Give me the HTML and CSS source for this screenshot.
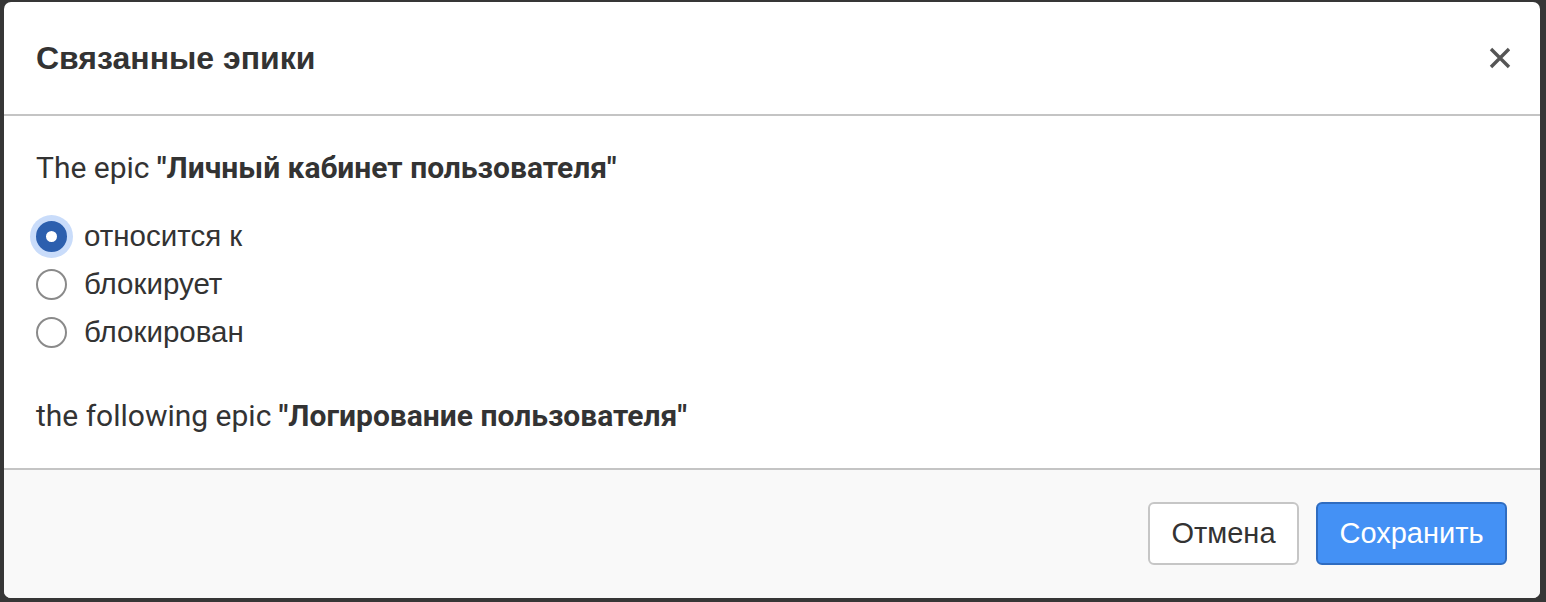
FILE: index.html
```html
<!DOCTYPE html>
<html lang="ru">
<head>
<meta charset="utf-8">
<link rel="stylesheet" href="styles.css">
</head>
<body>
<div class="backdrop">
  <div class="modal">
    <div class="modal-header">
      <h2 class="modal-title">Связанные эпики</h2>
      <button class="close" aria-label="Закрыть">
        <svg width="22" height="22" viewBox="0 0 22 22"><path d="M2 2 L20 20 M20 2 L2 20" stroke="#555" stroke-width="3.4" fill="none"/></svg>
      </button>
    </div>
    <div class="modal-body">
      <p class="line">The epic <b>"Личный кабинет пользователя"</b></p>
      <div class="radios">
        <label class="radio"><span class="dot checked"></span><span class="label">относится к</span></label>
        <label class="radio"><span class="dot"></span><span class="label">блокирует</span></label>
        <label class="radio"><span class="dot"></span><span class="label">блокирован</span></label>
      </div>
      <p class="line second">the following epic <b>"Логирование пользователя"</b></p>
    </div>
    <div class="modal-footer">
      <button class="btn btn-default">Отмена</button>
      <button class="btn btn-primary">Сохранить</button>
    </div>
  </div>
</div>
</body>
</html>
```
FILE: styles.css
```css
html, body {
  margin: 0;
  padding: 0;
  background: #363636;
}
.backdrop {
  padding: 2px 6px 4px 4px;
  height: 596px;
}
.modal {
  background: #fff;
  border-radius: 7px;
  height: 596px;
  display: flex;
  flex-direction: column;
  overflow: hidden;
}
.modal-header {
  height: 112px;
  border-bottom: 2px solid #c4c4c4;
  display: flex;
  align-items: center;
  justify-content: space-between;
  padding: 0 28px 0 32px;
  box-sizing: content-box;
}
.modal-title {
  margin: 0;
  font-family: "Liberation Sans", Arial, sans-serif;
  font-weight: bold;
  font-size: 32px;
  color: #333;
}
.close {
  background: none;
  border: 0;
  padding: 0;
  width: 24px;
  height: 24px;
  display: flex;
  align-items: center;
  justify-content: center;
}
.modal-body {
  height: 352px;
  padding: 0 32px;
  color: #333;
}
.line {
  margin: 0;
  font-family: Roboto, "Liberation Sans", sans-serif;
  font-size: 30px;
  height: 34px;
  line-height: 34px;
  padding-top: 35px;
}
.line b { font-weight: bold; }
.radios {
  display: flex;
  flex-direction: column;
  margin-top: 27px;
}
.radio {
  display: flex;
  align-items: center;
  height: 48px;
  font-family: "Liberation Sans", Arial, sans-serif;
  font-size: 29.5px;
  color: #333;
}
.dot {
  width: 31px;
  height: 31px;
  box-sizing: border-box;
  border-radius: 50%;
  border: 2px solid #8a8a8a;
  background: #fff;
  margin-right: 17px;
  flex: none;
}
.dot.checked {
  border: 10px solid #2c5fae;
  background: #fff;
  box-shadow: 0 0 0 6px #c9dcfa;
}
.line.second {
  padding-top: 43px;
}
.modal-footer {
  flex: 1;
  background: #f9f9f9;
  border-top: 2px solid #c4c4c4;
  display: flex;
  justify-content: flex-end;
  align-items: flex-start;
  gap: 17px;
  padding: 32px 33px 0 0;
}
.btn {
  height: 63px;
  border-radius: 6px;
  font-family: "Liberation Sans", Arial, sans-serif;
  font-size: 29px;
  padding: 0;
  box-sizing: border-box;
}
.btn-default {
  width: 151px;
  background: #fff;
  border: 2px solid #c6c6c6;
  color: #333;
}
.btn-primary {
  width: 191px;
  background: #4491f5;
  border: 2px solid #2f6cc0;
  color: #fff;
}
```
